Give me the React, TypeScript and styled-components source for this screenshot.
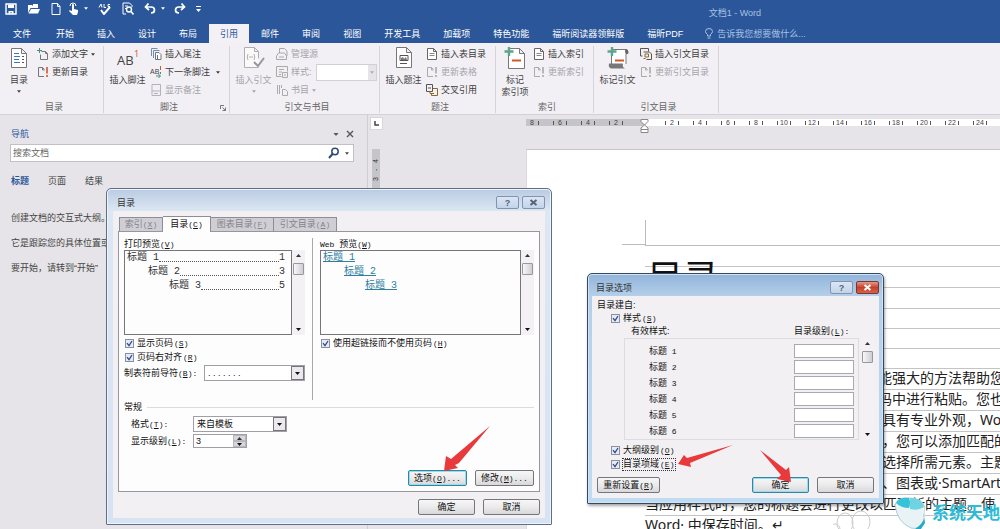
import React from "react";
import styled, { createGlobalStyle, css } from "styled-components";

const Global = createGlobalStyle`
  *, *::before, *::after { box-sizing: border-box; }
  body {
    margin: 0;
    font: 9px/12px "Liberation Sans", "Noto Sans CJK SC", sans-serif;
    color: #333;
    background: #e6e4e8;
  }
  button, input, select { font: inherit; color: inherit; margin: 0; padding: 0; border: 0; background: none; }
  p, h1, h2 { margin: 0; font-weight: normal; }
  svg { display: block; flex: none; }
`;

/* ---------- shell ---------- */

const Shell = styled.div`
  position: relative;
  display: flex;
  flex-direction: column;
  height: 100vh;
  overflow: hidden;
  white-space: nowrap;
`;

const Header = styled.header`
  background: #2b579a;
  color: #fff;
`;

const QuickBar = styled.div`
  display: flex;
  align-items: center;
  height: 24px;
  padding: 0 239px 7px 5px;
`;

const QuickButton = styled.button<{ $gap: number }>`
  display: flex;
  align-items: center;
  gap: 5px;
  margin-right: ${(p) => p.$gap}px;
  color: #fff;
`;

const WindowTitle = styled.h1`
  margin-left: auto;
  padding-top: 9px;
  font-size: 9px;
  color: #a9c0e2;
`;

const TabRow = styled.nav`
  display: flex;
  gap: 1px;
  height: 19px;
`;

const RibbonTab = styled.button<{ $active?: boolean; $file?: boolean }>`
  padding: 0 11px;
  ${(p) => p.$file && css`padding: 0 13px;`}
  ${(p) => p.$active && css`background: #f3f1f6; color: #2b579a;`}
`;

const TellMe = styled.label`
  display: flex;
  align-items: center;
  gap: 4px;
  margin-left: 10px;
  color: #a9c0e2;
  input { width: 110px; }
  input::placeholder { color: #a9c0e2; opacity: 1; }
`;

/* ---------- ribbon ---------- */

const Ribbon = styled.section`
  display: flex;
  height: 72px;
  flex: none;
  background: #f2f0f5;
  border-bottom: 1px solid #d3d1d6;
`;

const Group = styled.div<{ $w: number }>`
  display: flex;
  flex-direction: column;
  flex: none;
  width: ${(p) => p.$w}px;
  margin: 3px 0 1px;
  padding-left: 5px;
  border-right: 1px solid #d6d4d9;
`;

const GroupBody = styled.div`
  display: flex;
  flex: none;
  gap: 4px;
  height: 55px;
`;

const GroupLabel = styled.div`
  display: flex;
  justify-content: center;
  align-items: center;
  position: relative;
  height: 12px;
  color: #666;
  svg { position: absolute; right: 3px; top: 4px; }
`;

const BigButton = styled.button<{ $w?: number }>`
  display: flex;
  flex-direction: column;
  align-items: center;
  flex: none;
  width: ${(p) => p.$w ?? 37}px;
  padding-top: 1px;
  color: #444;
  &:disabled { color: #a6a4a9; }
  svg { margin-bottom: 5px; }
  svg + svg { margin: 4px 0 0; }
`;

const SmallColumn = styled.div`
  display: flex;
  flex-direction: column;
  align-items: flex-start;
`;

const SmallRow = styled.div`
  display: flex;
  align-items: flex-start;
  height: 18px;
`;

const SmallButton = styled.button`
  display: flex;
  align-items: center;
  gap: 3px;
  height: 18px;
  padding-bottom: 2px;
  color: #3c3c3c;
  &:disabled { color: #a6a4a9; }
`;

const StyleSelect = styled.span`
  display: flex;
  position: relative;
  width: 61px;
  height: 17px;
  margin-left: 4px;
  border: 1px solid #d2d0d5;
  background: #fff;
  select { flex: 1; appearance: none; }
  span {
    position: absolute;
    right: 0;
    top: 0;
    bottom: 0;
    display: flex;
    align-items: center;
    padding: 0 2px;
    background: #e6e4e9;
    color: #aaa;
    pointer-events: none;
  }
`;

/* ---------- workspace ---------- */

const Workspace = styled.main`
  display: flex;
  flex: 1;
  min-height: 0;
`;

const NavPane = styled.aside`
  flex: none;
  width: 368px;
  padding: 12px 13px 0 10px;
  border-right: 1px solid #cfcdd2;
  color: #444;
  overflow: hidden;
`;

const NavHead = styled.div`
  display: flex;
  align-items: center;
  height: 14px;
  color: #555;
  h2 { flex: 1; font-size: 9px; padding-left: 1px; color: #2b579a; }
  button { margin-left: 7px; }
`;

const SearchBox = styled.label`
  display: flex;
  align-items: center;
  gap: 5px;
  height: 18px;
  margin-top: 3px;
  padding: 0 4px 0 2px;
  background: #fff;
  border: 1px solid #c2c0c5;
  input { flex: 1; min-width: 0; }
  input::placeholder { color: #666; opacity: 1; }
`;

const NavTabs = styled.div`
  display: flex;
  gap: 19px;
  padding: 13px 1px 19px;
`;

const NavTab = styled.button<{ $active?: boolean }>`
  ${(p) => p.$active && css`color: #2b579a; font-weight: bold;`}
`;

const NavText = styled.p`
  height: 25px;
  line-height: 25px;
  padding-left: 1px;
`;

const SideRuler = styled.div`
  flex: none;
  width: 16px;
  padding: 2px 0 0 2px;
`;

const TabStop = styled.button`
  display: flex;
  align-items: center;
  justify-content: center;
  width: 13px;
  height: 13px;
  background: #fff;
  border: 1px solid #d8d6db;
`;

const SideScale = styled.div`
  display: flex;
  justify-content: flex-end;
  gap: 6px;
  width: 8px;
  height: 110px;
  margin: 19px 0 0 2px;
  padding-bottom: 10px;
  background: #c5c4c8;
  font-size: 7px;
  line-height: 8px;
  writing-mode: vertical-rl;
  transform: rotate(180deg);
`;

const DocArea = styled.div`
  flex: 1;
  min-width: 0;
  display: flex;
  flex-direction: column;
  padding: 4px 0 0 142px;
`;

const Ruler = styled.div`
  position: relative;
  display: flex;
  height: 7px;
  flex: none;
  font-size: 7px;
  line-height: 7px;
  color: #444;
`;

const RulerPart = styled.div<{ $margin?: boolean }>`
  display: flex;
  overflow: hidden;
  ${(p) =>
    p.$margin
      ? css`flex: none; width: 118px; padding-right: 14px; justify-content: flex-end; background: #c5c4c8;`
      : css`flex: 1; padding-left: 14px; background: #fff;`}
`;

const RulerMark = styled.span`
  display: flex;
  flex: none;
  align-items: center;
  justify-content: space-between;
  width: 28px;
  padding: 0 7px;
  &::before, &::after { content: ""; flex: none; width: 1px; height: 4px; background: #555; }
`;

const Indent = styled.svg`
  position: absolute;
  left: 114px;
  top: 0;
`;

const Page = styled.article`
  flex: 1;
  min-height: 0;
  margin-top: 23px;
  padding: 70px 0 0 95px;
  background: #fff;
  border-top: 1px solid #c6c4c8;
  border-left: 1px solid #dcdadf;
  overflow: hidden;
  color: #222;
`;

const MarginCorner = styled.div`
  width: 24px;
  height: 25px;
  border-right: 1px solid #bbb;
  border-bottom: 1px solid #bbb;
`;

const Grid = styled.div`
  margin-left: 23px;
  border-top: 1px solid #bbb;
`;

const GridRow = styled.div<{ $h: number; $indent?: number }>`
  height: ${(p) => p.$h}px;
  padding-left: ${(p) => p.$indent ?? 0}px;
  border-bottom: 1px solid #c4c4c4;
  font: 14px/18px "Noto Sans", "Noto Sans CJK SC", sans-serif;
`;

const DocTitle = styled.h2`
  padding: 4px 0 0 2px;
  font: 36px/50px "Noto Sans CJK SC", sans-serif;
  color: #111;
`;

/* ---------- dialogs ---------- */

const Dialog = styled.section<{ $x: number; $y: number; $w: number; $strong?: boolean }>`
  position: absolute;
  left: ${(p) => p.$x}px;
  top: ${(p) => p.$y}px;
  width: ${(p) => p.$w}px;
  border: 1px solid #5d6f88;
  border-radius: 5px 5px 1px 1px;
  padding: 0 6px 6px;
  color: #111;
  background: linear-gradient(#b9cbe2, #dde7f3 22px, #d7e3f2);
  box-shadow: inset 0 0 0 1px #eef4fa;
  ${(p) =>
    p.$strong &&
    css`
      padding: 0 4px 5px;
      border-color: #37475c;
      background: linear-gradient(#92b4da, #b4cfea 22px, #c0dcf2);
      box-shadow: inset 0 0 0 1px #cfe4f6, 1px 2px 3px rgba(0, 0, 0, 0.35);
    `}
`;

const TitleBar = styled.header`
  display: flex;
  align-items: center;
  gap: 3px;
  height: 22px;
  padding: 5px 0 0 4px;
  h2 { flex: 1; font-size: 9px; color: #333; }
`;

const CaptionButton = styled.button<{ $danger?: boolean }>`
  display: flex;
  align-items: center;
  justify-content: center;
  width: 23px;
  height: 13px;
  border: 1px solid #8093b0;
  border-radius: 2px;
  color: #55647c;
  font-weight: bold;
  background: linear-gradient(#dbe6f4, #c3d3e8);
  ${(p) => p.$danger && css`color: #fff; border-color: #7c3630; background: linear-gradient(#e39a88, #c8402a 50%, #d4614a);`}
`;

const Body = styled.div<{ $pad: string }>`
  padding: ${(p) => p.$pad};
  background: #f2f0f3;
`;

const DialogTabs = styled.div`
  display: flex;
  align-items: flex-end;
  height: 15px;
  padding-left: 1px;
`;

const DialogTab = styled.button<{ $active?: boolean; $w: number }>`
  width: ${(p) => p.$w}px;
  height: 14px;
  border: 1px solid #8f8d94;
  border-left-width: 0;
  border-bottom: 0;
  background: #d0ced5;
  color: #858389;
  &:first-child { border-left-width: 1px; }
  ${(p) => p.$active && css`height: 16px; margin-bottom: -1px; background: #fdfdfe; color: #111;`}
`;

const Panel = styled.div`
  padding: 6px 5px 5px;
  border: 1px solid #98969d;
  background: #fdfdfe;
`;

const Columns = styled.div`
  display: flex;
  min-height: 162px;
`;

const Column = styled.div<{ $first?: boolean }>`
  ${(p) =>
    p.$first
      ? css`width: 189px; padding-right: 7px; border-right: 1px solid #aaa8ae;`
      : css`flex: 1; padding-left: 7px;`}
`;

const PreviewRow = styled.div`
  display: flex;
  height: 85px;
  margin-bottom: 1px;
`;

const Preview = styled.div`
  flex: 1;
  padding: 0 6px 0 2px;
  border: 1px solid #77757c;
  font: 10px/14px "Liberation Mono", "Noto Sans CJK SC", monospace;
  color: #333;
`;

const PreviewLine = styled.div<{ $level: number }>`
  display: flex;
  height: 14px;
  padding-left: ${(p) => p.$level * 21}px;
  a { color: #2f7f9f; }
`;

const Leader = styled.span`
  flex: 1;
  height: 11px;
  border-bottom: 1px dotted #555;
`;

const ScrollTrack = styled.div`
  display: flex;
  flex-direction: column;
  align-items: center;
  width: 13px;
  padding: 4px 1px;
  background: #f3f1f4;
  svg:last-child { margin-top: auto; }
`;

const Thumb = styled.div`
  width: 11px;
  height: 12px;
  margin-top: 6px;
  border: 1px solid #99979e;
  border-radius: 1px;
  background: linear-gradient(90deg, #f8f8fa, #cfcdd4);
`;

const Check = styled.label<{ $indent?: number; $focus?: boolean }>`
  display: flex;
  align-items: center;
  gap: 2px;
  height: 14px;
  margin-left: ${(p) => p.$indent ?? 1}px;
  input {
    appearance: none;
    width: 9px;
    height: 9px;
    border: 1px solid #8b919c;
    background: #e4ebf4;
  }
  input:checked {
    background: #e4ebf4
      url("data:image/svg+xml,%3Csvg xmlns='http://www.w3.org/2000/svg' viewBox='0 0 7 7'%3E%3Cpath d='M1 3.2 3 5.6 6 1' fill='none' stroke='%23344a8c' stroke-width='1.3'/%3E%3C/svg%3E");
  }
  span { padding: 0 1px; }
  > span {
    ${(p) => p.$focus && css`outline: 1px dotted #333; outline-offset: -1px;`}
  }
`;

const Field = styled.div<{ $h: number; $mt: number; $label?: number; $indent?: number }>`
  display: flex;
  align-items: center;
  height: ${(p) => p.$h}px;
  margin-top: ${(p) => p.$mt}px;
  padding-left: ${(p) => p.$indent ?? 0}px;
  > label { width: ${(p) => p.$label ?? 80}px; flex: none; }
`;

const Drop = styled.span<{ $w: number }>`
  position: relative;
  display: flex;
  width: ${(p) => p.$w}px;
  height: 16px;
  border: 1px solid #a19fa6;
  background: #fff;
  select { flex: 1; appearance: none; padding-left: 3px; }
  span {
    position: absolute;
    right: 0;
    top: 0;
    bottom: 0;
    display: flex;
    align-items: center;
    padding: 0 3px;
    border: 1px solid #77757c;
    background: #ebe9ee;
    pointer-events: none;
  }
`;

const Spinner = styled.span`
  display: flex;
  width: 54px;
  height: 14px;
  border: 1px solid #a19fa6;
  background: #fff;
  input { flex: 1; min-width: 0; padding-left: 2px; }
  > span { display: flex; flex-direction: column; width: 13px; background: #d9d7dd; }
  button { flex: 1; display: flex; align-items: center; justify-content: center; border: 1px solid #b9b7be; }
`;

const Legend = styled.div`
  display: flex;
  align-items: center;
  gap: 5px;
  height: 12px;
  margin-top: 1px;
  &::after { content: ""; flex: 1; height: 1px; background: #dddbe0; }
`;

const Buttons = styled.div<{ $mt: number }>`
  display: flex;
  justify-content: flex-end;
  gap: 8px;
  margin-top: ${(p) => p.$mt}px;
`;

const PushButton = styled.button<{ $w: number; $hot?: boolean; $left?: boolean }>`
  width: ${(p) => p.$w}px;
  height: 16px;
  border: 1px solid #77757c;
  border-radius: 2px;
  background: linear-gradient(#f6f6f7, #ebebec 50%, #d8d8da);
  ${(p) => p.$hot && css`border-color: #2f86a3; box-shadow: inset 0 0 0 1px #9adcec;`}
  ${(p) => p.$left && css`margin-right: auto;`}
`;

const Mono = styled.span`
  font: 8px/12px "Liberation Mono", monospace;
`;

const Line = styled.div<{ $indent?: number }>`
  display: flex;
  justify-content: space-between;
  height: 12px;
  padding-left: ${(p) => p.$indent ?? 0}px;
`;

const LevelTitle = styled.span`
  width: 80px;
`;

const LevelArea = styled.div`
  display: flex;
  gap: 2px;
  height: 102px;
  margin: 1px 0 3px 27px;
`;

const LevelList = styled.div`
  flex: 1;
  padding: 4px 4px 0 24px;
  border: 1px solid #dedce1;
`;

const LevelRow = styled.div`
  display: flex;
  align-items: center;
  justify-content: space-between;
  height: 16px;
  input { width: 60px; height: 14px; border: 1px solid #aaa8ae; background: #fff; padding: 0 3px; }
`;

const Pointer = styled.svg<{ $x: number; $y: number }>`
  position: absolute;
  left: ${(p) => p.$x}px;
  top: ${(p) => p.$y}px;
  fill: #e8393b;
  pointer-events: none;
`;

const Watermark = styled.div`
  position: absolute;
  right: 0;
  bottom: 0;
  display: flex;
  gap: 7px;
  font: bold 17px/34px "Noto Sans CJK SC", sans-serif;
  color: #2cbcd8;
`;

/* ---------- drawings ---------- */

const Caret = ({ w = 5 }: { w?: number }) => (
  <svg width={w} height="3" viewBox="0 0 5 3" fill="currentColor"><path d="M0 0h5L2.5 3z" /></svg>
);
const Up = () => (
  <svg width="5" height="3" viewBox="0 0 5 3" fill="#333"><path d="M0 3h5L2.5 0z" /></svg>
);
const Key = ({ k, tail = "" }: { k: string; tail?: string }) => (
  <Mono>(<u>{k}</u>){tail}</Mono>
);

const Ico = ({ children }: { children: React.ReactNode }) => (
  <svg width="12" height="12" viewBox="0 0 12 12" fill="none" stroke="currentColor">{children}</svg>
);

const AddText = () => (
  <Ico><path d="M4.500 3.500h4l2 2v6h-7v-5M8.500 3.500v2h2" stroke="#777" /><path d="M2.500 0v5M0 2.500h5" stroke="#3f9277" /></Ico>
);
const Update = ({ on }: { on?: boolean }) => (
  <Ico><path d="M7 10.500H1.500v-9h4l2 2M5.500 1.500v2.500h2" stroke={on ? "#777" : "#aaa"} /><path d="M10 1v6.500M10 9v2" stroke={on ? "#d0562c" : "#aaa"} strokeWidth="1.600" /></Ico>
);
const EndNote = () => (
  <Ico><path d="M1.500 8V.500h6M3.500 10V2.500h6" stroke="#6f8fb0" /><path d="M5.500 4.500h3.500l2 2v5h-5.500z" stroke="#777" fill="#fff" /><path d="M7.500 11V7" stroke="#3a76b8" /></Ico>
);
const NextNote = () => (
  <svg width="12" height="12" viewBox="0 0 12 12" fill="none">
    <text x="0" y="8" fontSize="7" fontFamily="Liberation Sans" fill="#444">AB</text>
    <path d="M10.500 0v4" stroke="#d0562c" />
    <path d="M6 10h4M8.500 8l2 2-2 2M10.500 6v2" stroke="#3f9277" />
  </svg>
);
const ShowNote = () => (
  <Ico><path d="M2 .500h8.500v11H2zM2 7h8.500M4 9.500h4" stroke="#b5b3b8" /></Ico>
);
const Sources = () => (
  <Ico><path d="M3.500 5V.500h5l2.500 2.500V8M.500 8l2-3h6l2 3v3.500H.500zM3 9h5" stroke="#aaa" /></Ico>
);
const Styles = () => (
  <Ico><path d="M.500.500h11v5M.500.500v10h5M3 3.500h5M3 6h3M3 8.500h2M6.500 6.500h5v5h-5zM8 9h2" stroke="#aaa" /></Ico>
);
const Biblio = () => (
  <Ico><path d="M1.500 1v9M3.500 1v9M5.500 1v3M6.500 5.500h3l2 2v4h-5z" stroke="#aaa" /></Ico>
);
const ListSheet = () => (
  <Ico><path d="M1.500.500h6l3 3v8h-9zM7.500.500v3h3" stroke="#666" fill="#fff" /><path d="M3.500 5.500h5M3.500 7.500h5" stroke="#888" /></Ico>
);
const CrossRef = () => (
  <Ico><path d="M.500.500h6v7h-6zM2 4h3" stroke="#555" /><path d="M7 4.500h4.500v7H5.500V9M4 7v2.500h4" stroke="#8a6a2a" /></Ico>
);
const CiteList = () => (
  <Ico><path d="M2.500 8H.500V.500h8v3M3.500 4h6l2 2v5.500h-5" stroke="#555" /><path d="M5 6h3.500v3H5zM3.500 10.500h2" stroke="#8a6a2a" /></Ico>
);

const TocIcon = () => (
  <svg width="18" height="22" viewBox="0 0 18 22" fill="none">
    <path d="M1.500 1.500h10l5 5v14h-15zM11.500 1.500v5h5" stroke="#777" fill="#fff" />
    <path d="M4 6.500h5M4 9.500h6M4 12.500h5M4 15.500h6" stroke="#3a76b8" />
    <path d="M12 9.500h2M12 12.500h2M12 15.500h2" stroke="#555" />
  </svg>
);
const FootnoteIcon = () => (
  <svg width="24" height="22" viewBox="0 0 24 22">
    <text x="1" y="18" fontSize="13" fontFamily="Open Sans, sans-serif" fill="#444">AB</text>
    <text x="18" y="10" fontSize="9" fontFamily="Open Sans, sans-serif" fill="#d0562c">1</text>
  </svg>
);
const CitationIcon = () => (
  <svg width="22" height="22" viewBox="0 0 22 22" fill="none" stroke="#b0aeb3">
    <path d="M15.500 20.500H1.500v-20h10l4 4v7M11.500.500v4h4" fill="#fafafb" />
    <path d="M5 7q-1.500 3 0 6M11 7q1.500 3 0 6M6 10h4" />
    <path d="M11 15l4 4 6-8" stroke="#98969b" strokeWidth="2" />
  </svg>
);
const CaptionIcon = () => (
  <svg width="18" height="22" viewBox="0 0 18 22" fill="none">
    <path d="M1.500.500h10l5 5v15h-15zM11.500.500v5h5" stroke="#777" fill="#fff" />
    <path d="M5 8.500h8v5H5zM5 16.500h7" stroke="#555" />
    <path d="M6 13v-2l2-1 1 2 2-2 1 3z" fill="#777" />
  </svg>
);
const MarkIcon = ({ scroll }: { scroll?: boolean }) => (
  <svg width="22" height="22" viewBox="0 0 22 22" fill="none">
    {scroll ? (
      <>
        <path d="M4.500 17V2.500h15q2 1 1.500 4h-2V17" stroke="#777" fill="#fff" />
        <path d="M19 2q-2 2 0 5h2V3z" fill="#666" />
        <path d="M2 16.500h14q-1 4 2 5H4q-3-1-2-5z" fill="#777" />
      </>
    ) : (
      <path d="M4.500 21.500v-20h11l5 5v15zM15.500 1.500v5h5" stroke="#777" fill="#fff" />
    )}
    <path d="M5 0v9M.500 4.500h9" stroke="#5aa58b" strokeWidth="2.400" />
    <path d="M8 13.500h9" stroke="#d0562c" strokeWidth="2" />
  </svg>
);

const CloseGlyph = () => (
  <svg width="9" height="7" viewBox="0 0 9 7" stroke="currentColor" strokeWidth="2"><path d="M1.500 1l6 5M7.500 1l-6 5" /></svg>
);

const Scroll = () => (
  <ScrollTrack>
    <Up />
    <Thumb />
    <Caret />
  </ScrollTrack>
);

const levels = [1, 2, 3];
const preview = [1, 3, 5];

export default function App() {
  return (
    <Shell>
      <Global />
      <Header>
        <QuickBar>
          <QuickButton $gap={10} aria-label="保存">
            <svg width="12" height="12" viewBox="0 0 12 12"><path d="M1 1h10v10H1z" fill="none" stroke="#fff" strokeWidth="1.400" /><path d="M3 1.500h6V5H3zM3.500 8h5v3h-2V9h-1v2h-2z" fill="#fff" /></svg>
          </QuickButton>
          <QuickButton $gap={11} aria-label="打开">
            <svg width="13" height="11" viewBox="0 0 13 11" fill="#fff"><path d="M1 10V2h4l1 1V1h5v4H3.500zM4 6h9l-2 4.500H1.500z" /></svg>
          </QuickButton>
          <QuickButton $gap={7} aria-label="新建">
            <svg width="10" height="12" viewBox="0 0 10 12" fill="none" stroke="#fff"><path d="M1 .500h5.500l2.500 3v8H1zM6.500.500v3H9" /></svg>
          </QuickButton>
          <QuickButton $gap={10} aria-label="触摸模式">
            <svg width="11" height="13" viewBox="0 0 11 13" fill="#fff"><path d="M4 3q0-1 1-1t1 1v4l4 1v2l-1 3H5L1 9q0-1 1.500-.500L4 9z" /><path d="M2 4a3 3 0 1 1 6 0" fill="none" stroke="#fff" /></svg>
            <Caret w={4} />
          </QuickButton>
          <QuickButton $gap={11} aria-label="拼写检查">
            <svg width="13" height="12" viewBox="0 0 13 12" fill="none" stroke="#fff"><path d="M1 4.500 3 1l1 3.500M6 1v3.500h2M12 1.500h-2v2h2" /><path d="M3 7l3 4 6-7" strokeWidth="2" /></svg>
          </QuickButton>
          <QuickButton $gap={10} aria-label="打印预览">
            <svg width="12" height="13" viewBox="0 0 12 13" fill="none" stroke="#fff"><path d="M4 12H1V1h6.500l2.500 2.500V5M3 4h3M3 6.500h1" /><circle cx="7" cy="7.500" r="2.500" strokeWidth="1.400" /><path d="M9 9.500l2.500 3" strokeWidth="1.600" /></svg>
          </QuickButton>
          <QuickButton $gap={9} aria-label="撤消">
            <svg width="12" height="11" viewBox="0 0 12 11" fill="none" stroke="#fff" strokeWidth="1.700"><path d="M4.500.500 1.500 4l3.500 3M1.500 4H7q3.500 0 3.500 3T7 10" /></svg>
            <Caret w={4} />
          </QuickButton>
          <QuickButton $gap={10} aria-label="恢复">
            <svg width="12" height="11" viewBox="0 0 12 11" fill="none" stroke="#fff" strokeWidth="1.700"><path d="M7.500.500l3 3.500L7 7M10.500 4H5Q1.500 4 1.500 7T5 10" /></svg>
          </QuickButton>
          <QuickButton $gap={0} aria-label="自定义">
            <svg width="5" height="6" viewBox="0 0 5 6" fill="#fff"><path d="M0 0h5v1H0zM0 3h5L2.500 6z" /></svg>
          </QuickButton>
          <WindowTitle>文档1 - Word</WindowTitle>
        </QuickBar>
        <TabRow>
          <RibbonTab $file>文件</RibbonTab>
          {["开始", "插入", "设计", "布局", "引用", "邮件", "审阅", "视图", "开发工具", "加载项", "特色功能", "福昕阅读器领鲜版", "福昕PDF"].map((t) => (
            <RibbonTab key={t} $active={t === "引用"}>{t}</RibbonTab>
          ))}
          <TellMe>
            <svg width="8" height="11" viewBox="0 0 8 11" fill="none" stroke="currentColor"><path d="M2.500 8V6.500Q.500 5 .500 3.500a3.500 3 0 0 1 7 0Q7.500 5 5.500 6.500V8zM2.500 10h3" /></svg>
            <input aria-label="操作说明搜索" placeholder="告诉我您想要做什么..." />
          </TellMe>
        </TabRow>
      </Header>

      <Ribbon>
        <Group $w={104}>
          <GroupBody>
            <BigButton $w={28}><TocIcon />目录<Caret w={4} /></BigButton>
            <SmallColumn>
              <SmallButton><AddText />添加文字<Caret w={4} /></SmallButton>
              <SmallButton><Update on />更新目录</SmallButton>
            </SmallColumn>
          </GroupBody>
          <GroupLabel>目录</GroupLabel>
        </Group>
        <Group $w={126}>
          <GroupBody>
            <BigButton><FootnoteIcon />插入脚注</BigButton>
            <SmallColumn>
              <SmallButton><EndNote />插入尾注</SmallButton>
              <SmallButton><NextNote />下一条脚注<span /><Caret w={4} /></SmallButton>
              <SmallButton disabled><ShowNote />显示备注</SmallButton>
            </SmallColumn>
          </GroupBody>
          <GroupLabel>
            脚注
            <svg width="6" height="6" viewBox="0 0 6 6" fill="none" stroke="#777"><path d="M.500 4V.500H4M2.500 2.500l3 3M5.500 2.500v3h-3" /></svg>
          </GroupLabel>
        </Group>
        <Group $w={150}>
          <GroupBody>
            <BigButton disabled><CitationIcon />插入引文<Caret w={4} /></BigButton>
            <SmallColumn>
              <SmallButton disabled><Sources />管理源</SmallButton>
              <SmallRow>
                <SmallButton disabled><Styles />样式:</SmallButton>
                <StyleSelect>
                  <select aria-label="样式" disabled />
                  <span><Caret w={4} /></span>
                </StyleSelect>
              </SmallRow>
              <SmallButton disabled><Biblio />书目<Caret w={4} /></SmallButton>
            </SmallColumn>
          </GroupBody>
          <GroupLabel>引文与书目</GroupLabel>
        </Group>
        <Group $w={116}>
          <GroupBody>
            <BigButton><CaptionIcon />插入题注</BigButton>
            <SmallColumn>
              <SmallButton><ListSheet />插入表目录</SmallButton>
              <SmallButton disabled><Update />更新表格</SmallButton>
              <SmallButton><CrossRef />交叉引用</SmallButton>
            </SmallColumn>
          </GroupBody>
          <GroupLabel>题注</GroupLabel>
        </Group>
        <Group $w={98}>
          <GroupBody>
            <BigButton $w={28}><MarkIcon />标记<br />索引项</BigButton>
            <SmallColumn>
              <SmallButton><ListSheet />插入索引</SmallButton>
              <SmallButton disabled><Update />更新索引</SmallButton>
            </SmallColumn>
          </GroupBody>
          <GroupLabel>索引</GroupLabel>
        </Group>
        <Group $w={125}>
          <GroupBody>
            <BigButton><MarkIcon scroll />标记引文</BigButton>
            <SmallColumn>
              <SmallButton><CiteList />插入引文目录</SmallButton>
              <SmallButton disabled><Update />更新引文目录</SmallButton>
            </SmallColumn>
          </GroupBody>
          <GroupLabel>引文目录</GroupLabel>
        </Group>
      </Ribbon>

      <Workspace>
        <NavPane>
          <NavHead>
            <h2>导航</h2>
            <button aria-label="选项"><Caret w={6} /></button>
            <button aria-label="关闭">
              <svg width="8" height="8" viewBox="0 0 8 8" stroke="#555" strokeWidth="1.400"><path d="M1 1l6 6M7 1 1 7" /></svg>
            </button>
          </NavHead>
          <SearchBox>
            <input aria-label="搜索文档" placeholder="搜索文档" />
            <svg width="12" height="12" viewBox="0 0 12 12" fill="none" stroke="#2f4a78"><circle cx="7" cy="4.500" r="3.200" strokeWidth="1.500" /><path d="M4.500 7 1 11" strokeWidth="2" /></svg>
            <Caret w={4} />
          </SearchBox>
          <NavTabs>
            <NavTab $active>标题</NavTab>
            <NavTab>页面</NavTab>
            <NavTab>结果</NavTab>
          </NavTabs>
          <NavText>创建文档的交互式大纲。</NavText>
          <NavText>它是跟踪您的具体位置或</NavText>
          <NavText>要开始，请转到“开始”</NavText>
        </NavPane>
        <SideRuler>
          <TabStop aria-label="制表符">
            <svg width="5" height="5" viewBox="0 0 5 5" fill="none" stroke="#444" strokeWidth="1.500"><path d="M1 0v4h4" /></svg>
          </TabStop>
          <SideScale><span>3</span><span>-</span><span>4</span></SideScale>
        </SideRuler>
        <DocArea>
          <Ruler>
            <RulerPart $margin>{[8, 6, 4, 2].map((n) => <RulerMark key={n}>{n}</RulerMark>)}</RulerPart>
            <RulerPart>{[2, 4, 6, 8, 10, 12, 14, 16, 18, 20, 22, 24].map((n) => <RulerMark key={n}>{n}</RulerMark>)}</RulerPart>
            <Indent width="9" height="15" viewBox="0 0 9 15" fill="#fff" stroke="#888"><path d="M1 .500h7v2L4.500 6 1 2.500zM4.500 6 8 9v1.500H1V9zM1 10.500h7v3H1z" /></Indent>
          </Ruler>
          <Page>
            <MarginCorner />
            <Grid>
              <GridRow $h={21}><DocTitle>目录</DocTitle></GridRow>
              <GridRow $h={21} />
              <GridRow $h={21} />
              <GridRow $h={20} />
              <GridRow $h={20} />
              <GridRow $h={20} />
              <GridRow $h={21} $indent={233}>能强大的方法帮助您</GridRow>
              <GridRow $h={21} $indent={233}>码中进行粘贴。您也</GridRow>
              <GridRow $h={21} $indent={237}>具有专业外观，Wo</GridRow>
              <GridRow $h={21} $indent={237}>，您可以添加匹配的</GridRow>
              <GridRow $h={21} $indent={237}>选择所需元素。主题</GridRow>
              <GridRow $h={21} $indent={237}>、图表或·SmartArt</GridRow>
              <GridRow $h={21}>当应用样式时，您的标题会进行更改以匹配新的主题。使</GridRow>
              <GridRow $h={21}>Word· 中保存时间。↵</GridRow>
            </Grid>
          </Page>
        </DocArea>
      </Workspace>

      <Watermark>
        <svg width="92" height="34" viewBox="0 0 92 34">
          <g fill="none" stroke="#ccc"><ellipse cx="12" cy="28" rx="8" ry="10" /><ellipse cx="28" cy="27" rx="9" ry="11" /><circle cx="2" cy="34" r="5" /></g>
          <path d="M62 10Q64 2 76 3q14 0 16 10v14q-6 8-14 6-14-6-16-23z" fill="#e9f3f5" stroke="#aecdd4" />
          <path d="M63 8q3-6 13-5 2 5 0 10-8 0-13-5z" fill="#35c3d8" />
          <path d="M77 3q12 0 14 9-6 4-14 2z" fill="#6fd4e2" />
          <path d="M90 18q4 8-8 16h6l4-6z" fill="#22aac6" />
        </svg>
        系统天地
      </Watermark>

      <Dialog $x={106} $y={188} $w={446} role="dialog" aria-label="目录">
        <TitleBar>
          <h2>目录</h2>
          <CaptionButton aria-label="帮助">?</CaptionButton>
          <CaptionButton aria-label="关闭"><CloseGlyph /></CaptionButton>
        </TitleBar>
        <Body $pad="5px 5px 3px">
          <DialogTabs>
            <DialogTab $w={44}>索引<Key k="X" /></DialogTab>
            <DialogTab $w={48} $active>目录<Key k="C" /></DialogTab>
            <DialogTab $w={63}>图表目录<Key k="F" /></DialogTab>
            <DialogTab $w={63}>引文目录<Key k="A" /></DialogTab>
          </DialogTabs>
          <Panel>
            <Columns>
              <Column $first>
                <Line><span>打印预览<Key k="V" /></span></Line>
                <PreviewRow>
                  <Preview>
                    {levels.map((n, i) => (
                      <PreviewLine key={n} $level={i}>标题 {n}<Leader />{preview[i]}</PreviewLine>
                    ))}
                  </Preview>
                  <Scroll />
                </PreviewRow>
                <Check><input type="checkbox" defaultChecked /><span>显示页码<Key k="S" /></span></Check>
                <Check><input type="checkbox" defaultChecked /><span>页码右对齐<Key k="R" /></span></Check>
                <Field $h={16} $mt={1}>
                  <label htmlFor="leader">制表符前导符<Key k="B" tail=":" /></label>
                  <Drop $w={101}>
                    <select id="leader"><option>. . . . . . .</option></select>
                    <span><Caret /></span>
                  </Drop>
                </Field>
              </Column>
              <Column>
                <Line><span><Mono>Web </Mono>预览<Key k="W" /></span></Line>
                <PreviewRow>
                  <Preview>
                    {levels.map((n, i) => (
                      <PreviewLine key={n} $level={i}><a href="#toc">标题 {n}</a></PreviewLine>
                    ))}
                  </Preview>
                  <Scroll />
                </PreviewRow>
                <Check><input type="checkbox" defaultChecked /><span>使用超链接而不使用页码<Key k="H" /></span></Check>
              </Column>
            </Columns>
            <Legend>常规</Legend>
            <Field $h={16} $mt={3} $label={62} $indent={7}>
              <label htmlFor="format">格式<Key k="T" tail=":" /></label>
              <Drop $w={94}>
                <select id="format"><option>来自模板</option></select>
                <span><Caret /></span>
              </Drop>
            </Field>
            <Field $h={14} $mt={2} $label={62} $indent={7}>
              <label htmlFor="depth">显示级别<Key k="L" tail=":" /></label>
              <Spinner>
                <input id="depth" defaultValue="3" />
                <span>
                  <button aria-label="增加"><Up /></button>
                  <button aria-label="减少"><Caret /></button>
                </span>
              </Spinner>
            </Field>
            <Buttons $mt={22}>
              <PushButton $w={59} $hot>选项<Key k="O" tail="..." /></PushButton>
              <PushButton $w={59}>修改<Key k="M" tail="..." /></PushButton>
            </Buttons>
          </Panel>
          <Buttons $mt={7}>
            <PushButton $w={57}>确定</PushButton>
            <PushButton $w={57}>取消</PushButton>
          </Buttons>
        </Body>
      </Dialog>

      <Dialog $x={587} $y={273} $w={297} $strong role="dialog" aria-label="目录选项">
        <TitleBar>
          <h2>目录选项</h2>
          <CaptionButton aria-label="帮助">?</CaptionButton>
          <CaptionButton $danger aria-label="关闭"><CloseGlyph /></CaptionButton>
        </TitleBar>
        <Body $pad="3px 5px 5px">
          <Line>目录建自:</Line>
          <Check $indent={14}><input type="checkbox" defaultChecked /><span>样式<Key k="S" /></span></Check>
          <Line $indent={34}>
            <span>有效样式:</span>
            <LevelTitle>目录级别<Key k="L" tail=":" /></LevelTitle>
          </Line>
          <LevelArea>
            <LevelList>
              {[1, 2, 3, 4, 5, 6].map((n) => (
                <LevelRow key={n}>
                  <label htmlFor={`level${n}`}>标题<Mono> {n}</Mono></label>
                  <input id={`level${n}`} />
                </LevelRow>
              ))}
            </LevelList>
            <Scroll />
          </LevelArea>
          <Check $indent={14}><input type="checkbox" defaultChecked /><span>大纲级别<Key k="O" /></span></Check>
          <Check $indent={14} $focus><input type="checkbox" defaultChecked /><span>目录项域<Key k="E" /></span></Check>
          <Buttons $mt={6}>
            <PushButton $w={63} $left>重新设置<Key k="R" /></PushButton>
            <PushButton $w={57} $hot>确定</PushButton>
            <PushButton $w={57}>取消</PushButton>
          </Buttons>
        </Body>
      </Dialog>

      <Pointer $x={442} $y={425} width="50" height="48" viewBox="442 425 50 48"><path d="M444 471l2-15 5 3 39-33-31 37-4 2 3 3z" /></Pointer>
      <Pointer $x={676} $y={443} width="58" height="26" viewBox="676 443 58 26"><path d="M678 464l6-9 3 3 46-13-43 18 1 4z" /></Pointer>
      <Pointer $x={759} $y={449} width="34" height="35" viewBox="759 449 34 35"><path d="M791 482l-14-3 4-4-21-25 26 20 3-3z" /></Pointer>
    </Shell>
  );
}
